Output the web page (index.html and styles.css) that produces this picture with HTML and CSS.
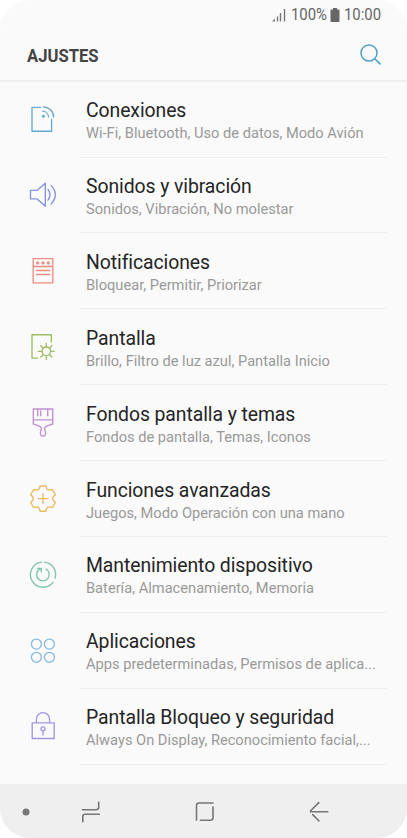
FILE: index.html
```html
<!DOCTYPE html>
<html lang="es">
<head>
<meta charset="utf-8">
<title>Ajustes</title>
<link rel="stylesheet" href="styles.css">
</head>
<body>
<div class="phone">
  <div class="status">
    <svg class="signal" width="14" height="14" viewBox="0 0 14 14"><path d="M0 13.5 3 10.5V13.5Z" fill="#777"/><path d="M5.5 13.5V8.5M8.5 13.5V5M12.5 13.5V1" stroke="#777" stroke-width="1.4"/></svg>
    <span class="percent">100%</span>
    <svg class="battery" width="10" height="14" viewBox="0 0 10 14"><path d="M3 0H7V1.5H9Q9.5 1.5 9.5 2V13Q9.5 14 8.5 14H1.5Q.5 14 .5 13V2Q.5 1.5 1 1.5H3Z" fill="#666"/></svg>
    <span class="time">10:00</span>
  </div>
  <header class="header">
    <h1>AJUSTES</h1>
    <svg class="search" width="22" height="22" viewBox="0 0 22 22"><circle cx="9" cy="9" r="8"/><path d="M14.7 14.7 20.5 20.4"/></svg>
  </header>
  <main class="list">
    <section class="row">
      <svg class="icon blue" viewBox="0 0 30 30"><path d="M12.7 3.3H4V27.2H23.6V15.3M14.7 7.2A6 6 0 0 1 20.5 12.8M15.3 2.9A10.2 10.2 0 0 1 25.6 13"/><circle class="fill" cx="15.4" cy="12.3" r="1.5"/></svg>
      <div class="text"><h2>Conexiones</h2><p>Wi-Fi, Bluetooth, Uso de datos, Modo Avión</p></div>
    </section>
    <section class="row">
      <svg class="icon indigo" viewBox="0 0 30 30"><path d="M2.5 10.3H9.2L17.3 3.3V26.3L9.2 18.9H2.5ZM20 9.4Q24 14.7 20 20.1M23 5.4Q31.8 14.7 23 24.1"/></svg>
      <div class="text"><h2>Sonidos y vibración</h2><p>Sonidos, Vibración, No molestar</p></div>
    </section>
    <section class="row">
      <svg class="icon coral" viewBox="0 0 30 30"><path d="M5.2 2.6H24.8V26.8H5.2ZM5.2 10.5H24.8M8.3 14.5H21.7M8.3 18.5H21.7"/><g class="fill"><circle cx="9.7" cy="6.9" r="1.6"/><circle cx="15" cy="6.9" r="1.6"/><circle cx="20.3" cy="6.9" r="1.6"/></g></svg>
      <div class="text"><h2>Notificaciones</h2><p>Bloquear, Permitir, Priorizar</p></div>
    </section>
    <section class="row">
      <svg class="icon green" viewBox="0 0 30 30"><path d="M9.7 26.1H4V2.7H23.3V10M18.3 11.3V15M18.3 23.6V27.3M10.3 19.3H14M22.6 19.3H26.3M12.7 13.7 15.2 16.2M21.4 22.4 23.9 24.9M12.7 24.9 15.2 22.4M21.4 16.2 23.9 13.7"/><circle cx="18.3" cy="19.3" r="4.3"/></svg>
      <div class="text"><h2>Pantalla</h2><p>Brillo, Filtro de luz azul, Pantalla Inicio</p></div>
    </section>
    <section class="row">
      <svg class="icon purple" viewBox="0 0 30 30"><path d="M5.3 1H24.7V16L19.2 17.8Q16.3 18.8 16.6 20.7L17.6 24.8Q17.8 28 15 28Q12.2 28 12.4 24.8L13.4 20.7Q13.7 18.8 10.8 17.8L5.3 16ZM5.3 11.8H24.7M9.7 1V7.7M12.7 3V7.7M19.7 1V7.7"/></svg>
      <div class="text"><h2>Fondos pantalla y temas</h2><p>Fondos de pantalla, Temas, Iconos</p></div>
    </section>
    <section class="row">
      <svg class="icon amber" viewBox="0 0 30 30"><path d="M12.1 2H17.9L18.8 4.9Q19.2 6.1 20.4 5.9L24.4 5.7L27.3 10.7L25.2 13Q24 14.6 25.2 16.2L27.3 18.5L24.4 23.5L20.8 22.8Q19.2 22.8 18.7 24.5L17.9 27.2H12.1L11.3 24.5Q10.8 22.8 9.2 22.8L5.6 23.5L2.7 18.5L4.8 16.2Q6 14.6 4.8 13L2.7 10.7L5.6 5.7L9.6 5.9Q10.8 6.1 11.2 4.9ZM15 9.6V19.6M10 14.6H20"/></svg>
      <div class="text"><h2>Funciones avanzadas</h2><p>Juegos, Modo Operación con una mano</p></div>
    </section>
    <section class="row">
      <svg class="icon teal" viewBox="0 0 30 30"><path d="M16.5 2.1A12.6 12.6 0 0 1 27.1 18.2M25 22.3A12.6 12.6 0 1 1 13.5 2.1M18 9.1A6.3 6.3 0 1 1 11.7 9.2L12.9 8.5M9.6 8.3H13.3V12"/></svg>
      <div class="text"><h2>Mantenimiento dispositivo</h2><p>Batería, Almacenamiento, Memoria</p></div>
    </section>
    <section class="row">
      <svg class="icon sky" viewBox="0 0 30 30"><circle cx="8.4" cy="8.1" r="5"/><circle cx="21.4" cy="8.1" r="5"/><circle cx="8.4" cy="21.3" r="5"/><circle cx="21.4" cy="21.3" r="5"/></svg>
      <div class="text"><h2>Aplicaciones</h2><p>Apps predeterminadas, Permisos de aplica...</p></div>
    </section>
    <section class="row">
      <svg class="icon violet" viewBox="0 0 30 30"><path d="M4.2 11.8H26.2V27.5H4.2ZM8.4 11.8V8.2A6.6 6.6 0 0 1 21.6 8.2V11.8M15 20V24"/><circle cx="15" cy="17.8" r="2"/></svg>
      <div class="text"><h2>Pantalla Bloqueo y seguridad</h2><p>Always On Display, Reconocimiento facial,...</p></div>
    </section>
  </main>
  <nav class="nav">
    <svg width="8" height="8" viewBox="0 0 8 8"><circle cx="4" cy="4" r="3.5" fill="#777"/></svg>
    <svg class="key recent" width="20" height="22" viewBox="0 0 20 22"><path d="M1.5 8.8H15Q17.7 8.8 17.7 6.3V1.3M18.3 13.2H4Q1.8 13.2 1.8 15.5V20.7"/></svg>
    <svg class="key home" width="20" height="22" viewBox="0 0 20 22"><path d="M18 2H4Q1.5 2 1.5 4.5V19M5.5 19.3H15.5Q18 19.3 18 16.8V6"/></svg>
    <svg class="key back" width="20" height="22" viewBox="0 0 20 22"><path d="M9.8 1.6 1.6 9.8V10.7H18.8M3.7 13.6 10 20"/></svg>
  </nav>
</div>
</body>
</html>
```
FILE: styles.css
```css
* { box-sizing: border-box; }
body { margin: 0; background: #fff; font-family: Roboto, "Liberation Sans", sans-serif; }
.phone {
  width: 407px; height: 838px; overflow: hidden;
  display: flex; flex-direction: column;
  border-radius: 30px; background: #fafafa;
}
.status {
  height: 30px; padding: 0 26px 0 0;
  display: flex; align-items: center; justify-content: flex-end;
  color: #666; font-size: 16px; line-height: 30px;
}
.signal { margin-right: 5px; }
.percent { width: 37px; white-space: nowrap; transform: scaleX(0.93); transform-origin: left; }
.battery { margin: 0 4px 0 2px; }
.time { width: 37px; transform: scaleX(0.93); transform-origin: left; }
.header {
  height: 52px; padding: 0 25px 0 27px;
  display: flex; align-items: center; justify-content: space-between;
  border-bottom: 2px solid #efefef;
}
h1 { margin: 1px 0 0; color: #444; font-size: 19px; font-weight: 700; line-height: 22px; transform: scaleX(0.875); transform-origin: left; }
.search { fill: none; stroke: #4c9fc3; stroke-width: 1.5; }
.list { flex: 1; }
.row { height: 75.9px; padding-left: 28px; display: flex; }
.icon {
  width: 30px; height: 30px; margin-top: 22.3px; flex: none; overflow: visible;
  fill: none; stroke: currentColor; stroke-width: 1.35; stroke-linejoin: round; stroke-linecap: round;
}
.icon .fill { fill: currentColor; stroke: none; }
.text {
  width: 307px; height: 75.6px; margin-left: 22px; padding: 16.1px 0 0 6px;
  border-bottom: 1.5px solid #ededed; white-space: nowrap;
}
h2 { margin: 0; color: #252525; font-size: 19.4px; font-weight: 400; line-height: 25px; letter-spacing: -0.08px; }
p { margin: 0; color: #999; font-size: 14.65px; line-height: 20px; }
.blue { color: #65abd0; }
.indigo { color: #8295dc; }
.coral { color: #ed8c83; }
.green { color: #9fbd62; }
.purple { color: #c18fd0; }
.amber { color: #ebb95f; }
.teal { color: #7cc4ad; }
.sky { color: #85bbe2; }
.violet { color: #a396df; }
.nav { height: 54px; padding: 1px 0 0 22px; display: flex; align-items: center; background: #efefef; }
.key { fill: none; stroke: #777; stroke-width: 1.6; stroke-linecap: round; }
.recent { margin-left: 51px; }
.home { margin-left: 94px; }
.back { margin-left: 94px; }
```
